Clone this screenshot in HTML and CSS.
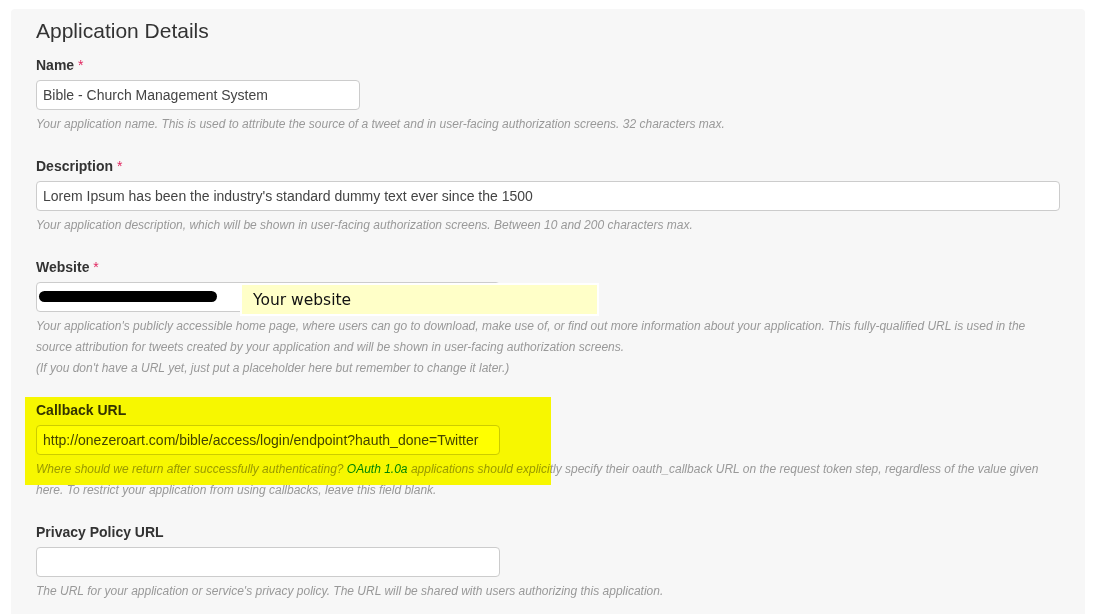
FILE: index.html
```html
<!DOCTYPE html>
<html>
<head>
<meta charset="utf-8">
<link rel="stylesheet" href="styles.css">
</head>
<body>
<div class="panel">
  <h2 class="title">Application Details</h2>

  <div class="group">
    <label class="label">Name <span class="req">*</span></label>
    <div class="input w-name">Bible - Church Management System</div>
    <p class="help">Your application name. This is used to attribute the source of a tweet and in user-facing authorization screens. 32 characters max.</p>
  </div>

  <div class="group">
    <label class="label">Description <span class="req">*</span></label>
    <div class="input w-full">Lorem Ipsum has been the industry's standard dummy text ever since the 1500</div>
    <p class="help">Your application description, which will be shown in user-facing authorization screens. Between 10 and 200 characters max.</p>
  </div>

  <div class="group rel">
    <label class="label">Website <span class="req">*</span></label>
    <div class="input w-url"><span class="redact"></span></div>
    <p class="help">Your application's publicly accessible home page, where users can go to download, make use of, or find out more information about your application. This fully-qualified URL is used in the source attribution for tweets created by your application and will be shown in user-facing authorization screens.<br>(If you don't have a URL yet, just put a placeholder here but remember to change it later.)</p>
    <div class="note">Your website</div>
  </div>

  <div class="group rel">
    <label class="label">Callback URL</label>
    <div class="input w-url">http://onezeroart.com/bible/access/login/endpoint?hauth_done=Twitter</div>
    <p class="help">Where should we return after successfully authenticating? <a class="link">OAuth 1.0a</a> applications should explicitly specify their oauth_callback URL on the request token step, regardless of the value given here. To restrict your application from using callbacks, leave this field blank.</p>
    <div class="highlight"></div>
  </div>

  <div class="group">
    <label class="label">Privacy Policy URL</label>
    <div class="input w-url"></div>
    <p class="help">The URL for your application or service's privacy policy. The URL will be shared with users authorizing this application.</p>
  </div>
</div>
</body>
</html>
```

FILE: styles.css
```css
html, body {
  margin: 0;
  padding: 0;
  background: #ffffff;
}
body {
  font-family: "Liberation Sans", Arial, sans-serif;
  color: #333333;
  overflow: hidden;
}
.panel {
  margin: 9px 21px 0 11px;
  padding: 11px 25px 40px 25px;
  background: #f7f7f7;
  border-radius: 4px;
  min-height: 620px;
}
.title {
  margin: 0 0 13px 0;
  font-size: 21px;
  line-height: 22px;
  font-weight: normal;
  color: #333333;
}
.group {
  margin-bottom: 21px;
}
.rel {
  position: relative;
}
.label {
  display: block;
  font-size: 14px;
  line-height: 20px;
  font-weight: bold;
  color: #333333;
  margin-bottom: 5px;
}
.req {
  color: #e0245e;
  font-weight: normal;
}
.input {
  box-sizing: border-box;
  height: 30px;
  padding: 0 6px;
  border: 1px solid #cccccc;
  border-radius: 4px;
  background: #ffffff;
  font-size: 14px;
  line-height: 28px;
  color: #444444;
  white-space: nowrap;
  overflow: hidden;
}
.w-name { width: 324px; }
.w-full { width: 100%; }
.w-url { width: 464px; }
.help {
  margin: 4px 0 0 0;
  font-size: 12px;
  line-height: 21px;
  font-style: italic;
  color: #999999;
}
.link {
  color: #0084b4;
  text-decoration: none;
}
.redact {
  display: inline-block;
  vertical-align: middle;
  margin-left: -4px;
  margin-top: -3px;
  width: 178px;
  height: 11px;
  border-radius: 6px;
  background: #000000;
}
.note {
  position: absolute;
  box-sizing: border-box;
  left: 204px;
  top: 26px;
  width: 359px;
  height: 33px;
  border: 2px solid #ffffff;
  background: #ffffc8;
  padding-left: 11px;
  font-family: "DejaVu Sans", Verdana, sans-serif;
  font-size: 15.5px;
  line-height: 31px;
  color: #111111;
}
.highlight {
  position: absolute;
  left: -11px;
  top: -3px;
  width: 526px;
  height: 88px;
  background: #ffff00;
  mix-blend-mode: multiply;
  pointer-events: none;
}
```
